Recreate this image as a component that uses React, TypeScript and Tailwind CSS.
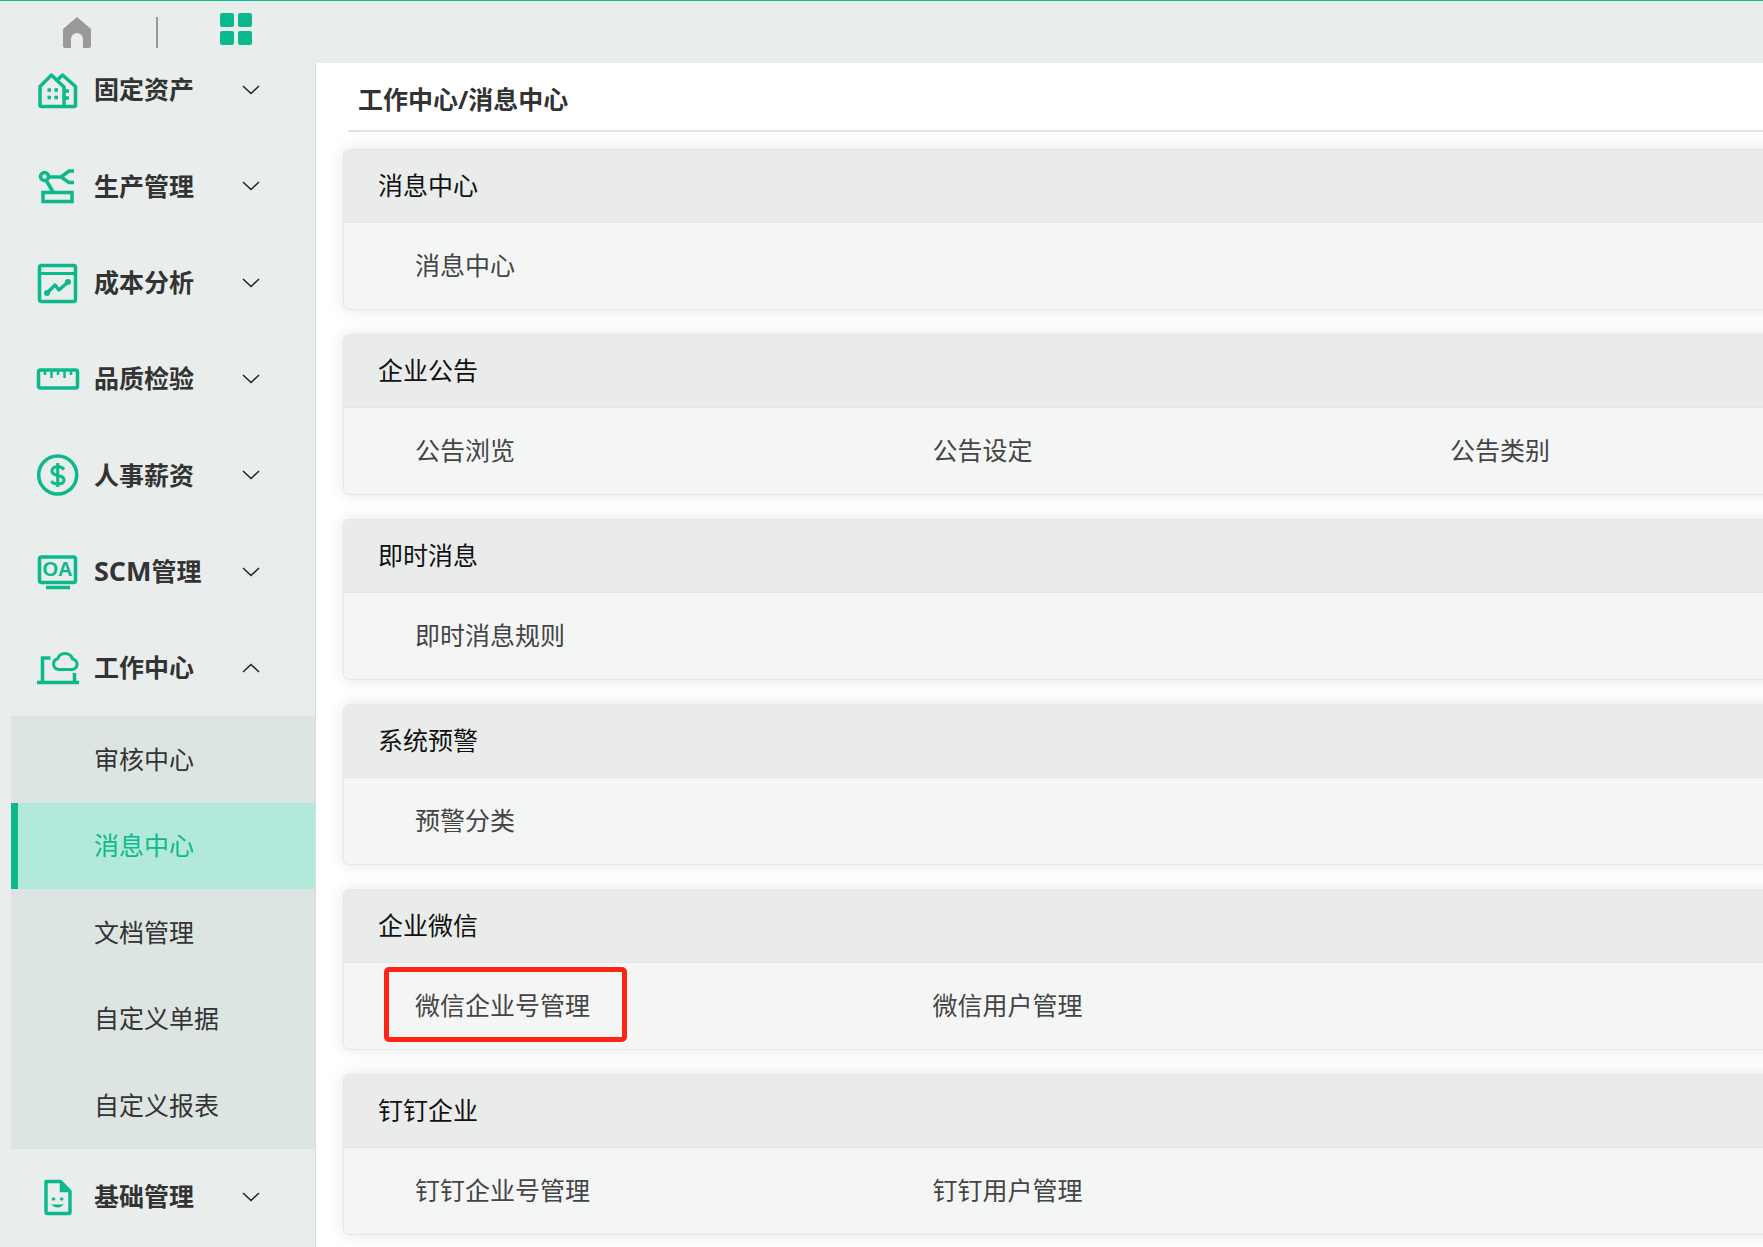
import type { ReactNode } from 'react';

const GREEN = '#0cb98c';

const FixedAssetIcon = () => (
  <svg width="44" height="44" viewBox="0 0 44 44" fill="none" stroke={GREEN} strokeWidth="3.5" strokeLinejoin="round">
    <path d="M4 18.5 L15.5 7 L21 12.5 L26.5 7 L39.5 18.5 V37 a1.5 1.5 0 0 1 -1.5 1.5 H5.5 a1.5 1.5 0 0 1 -1.5 -1.5 Z" />
    <path d="M21 12.5 L28 19 V38" />
    <path d="M11.5 22 H15 M18.5 22 H22 M11.5 29.5 H15 M18.5 29.5 H22 M29 23 H33 M29 30 H33" />
  </svg>
);

const ProductionIcon = () => (
  <svg width="44" height="44" viewBox="0 0 44 44" fill="none" stroke={GREEN} strokeWidth="3.5">
    <rect x="7" y="28.5" width="29" height="9" />
    <circle cx="8.5" cy="12.5" r="4" />
    <path d="M10 16 L17 28 M13 13 H25 M38 7 H33 L25 13 L33 18.5 H38" />
  </svg>
);

const CostIcon = () => (
  <svg width="44" height="44" viewBox="0 0 44 44" fill="none" stroke={GREEN} strokeWidth="3.5">
    <rect x="3.5" y="4.5" width="36" height="36" rx="2" />
    <path d="M3.5 12.5 H39.5" strokeWidth="3" />
    <path d="M11 32 L19 24 L23 29 L32 21" strokeLinecap="round" strokeLinejoin="round" />
    <circle cx="11" cy="32" r="3" fill={GREEN} stroke="none" />
    <circle cx="32" cy="21" r="3" fill={GREEN} stroke="none" />
  </svg>
);

const RulerIcon = () => (
  <svg width="44" height="44" viewBox="0 0 44 44" fill="none" stroke={GREEN} strokeWidth="3.5">
    <rect x="2.5" y="13" width="39" height="18" rx="2" />
    <path d="M9 13 V18 M15.5 13 V21 M22 13 V18 M28.5 13 V21 M35 13 V18" strokeWidth="2.5" />
  </svg>
);

const SalaryIcon = () => (
  <svg width="44" height="44" viewBox="0 0 44 44" fill="none" stroke={GREEN} strokeWidth="3.5">
    <circle cx="21.7" cy="22" r="19" />
    <path
      d="M28 16.5 C26.5 14.5 24.5 13.5 21.7 13.5 C18 13.5 16 15.5 16 18 C16 21 19 22 21.7 22.5 C25 23 28 24 28 27 C28 29.5 25.5 31 21.7 31 C18.5 31 16.5 30 15.5 28 M21.7 10 V34"
      strokeWidth="3"
    />
  </svg>
);

const ScmIcon = () => (
  <svg width="44" height="44" viewBox="0 0 44 44" fill="none" stroke={GREEN} strokeWidth="3.5">
    <rect x="3.5" y="7" width="36" height="25.5" rx="2" />
    <path d="M10 37.5 H34" />
    <text x="21.5" y="26" textAnchor="middle" fontSize="20" fontWeight="700" fontFamily="Liberation Sans" fill={GREEN} stroke="none">
      OA
    </text>
  </svg>
);

const WorkIcon = () => (
  <svg width="44" height="44" viewBox="0 0 44 44" fill="none" stroke={GREEN} strokeWidth="3.5">
    <path d="M1 36.5 H43" />
    <path d="M6.5 36 V12 H14.5 M38.5 27 V36" />
    <path d="M22.5 23.5 a5.5 5.5 0 0 1 -0.8 -10.8 C23 9 26 7.5 29 7.5 C33 7.5 35.6 10 36.5 13 a5.3 5.3 0 0 1 0 10.5 Z" strokeLinejoin="round" strokeWidth="3" />
  </svg>
);

const BaseIcon = () => (
  <svg width="44" height="44" viewBox="0 0 44 44" fill="none" stroke={GREEN} strokeWidth="3.5" strokeLinejoin="round">
    <path d="M10 6.5 H24.5 L34 16.5 V37 a1.5 1.5 0 0 1 -1.5 1.5 H11.5 a1.5 1.5 0 0 1 -1.5 -1.5 Z" />
    <path d="M24.5 7 V16.5 H33.5 Z" fill={GREEN} strokeWidth="1.5" />
    <circle cx="17.5" cy="24" r="1.8" fill={GREEN} stroke="none" />
    <circle cx="25.7" cy="24" r="1.8" fill={GREEN} stroke="none" />
    <path d="M15 29.5 Q21.6 35.5 28 29.5 Z" fill={GREEN} stroke="none" />
  </svg>
);

const Chevron = ({ up }: { up?: boolean }) => (
  <svg width="18" height="10" viewBox="0 0 18 10" fill="none" stroke="#222" strokeWidth="1.5" className="shrink-0">
    <path d={up ? 'M1 9 L9 1.5 L17 9' : 'M1 1 L9 8.5 L17 1'} />
  </svg>
);

const MenuRow = ({ icon, label, up }: { icon: ReactNode; label: ReactNode; up?: boolean }) => (
  <div className="flex h-[96.3px] items-center gap-[14px] pl-[36px] pr-[55px]">
    <div className="h-[44px] w-[44px] shrink-0">{icon}</div>
    <span className="flex-1 text-[25px] font-bold text-[#333]">{label}</span>
    <Chevron up={up} />
  </div>
);

const topMenus = [
  { key: 'assets', label: '固定资产', icon: <FixedAssetIcon /> },
  { key: 'production', label: '生产管理', icon: <ProductionIcon /> },
  { key: 'cost', label: '成本分析', icon: <CostIcon /> },
  { key: 'quality', label: '品质检验', icon: <RulerIcon /> },
  { key: 'hr', label: '人事薪资', icon: <SalaryIcon /> },
  {
    key: 'scm',
    label: (
      <>
        <span className="text-[27px] leading-none">SCM</span>管理
      </>
    ),
    icon: <ScmIcon />,
  },
];

const subMenus = ['审核中心', '消息中心', '文档管理', '自定义单据', '自定义报表'];

const sections = [
  { title: '消息中心', links: ['消息中心'] },
  { title: '企业公告', links: ['公告浏览', '公告设定', '公告类别'] },
  { title: '即时消息', links: ['即时消息规则'] },
  { title: '系统预警', links: ['预警分类'] },
  { title: '企业微信', links: ['微信企业号管理', '微信用户管理'], marked: true },
  { title: '钉钉企业', links: ['钉钉企业号管理', '钉钉用户管理'] },
];

export default function App() {
  return (
    <div className="flex h-screen flex-col overflow-hidden bg-white font-['Open_Sans','Noto_Sans_CJK_SC',sans-serif]">
      <header className="relative z-10 flex h-[63px] shrink-0 items-start border-t border-[#0cb98c] bg-[#e9edec] pl-[63px]">
        <svg width="28" height="31" viewBox="0 0 28 31" fill="#999" className="mt-[16px]">
          <path d="M14 0 L28 12 V29 a2 2 0 0 1 -2 2 H20 V22 a6 6 0 0 0 -12 0 V31 H2 a2 2 0 0 1 -2 -2 V12 Z" />
        </svg>
        <div className="ml-[65px] mt-[16px] h-[31px] w-[2px] bg-[#999]" />
        <div className="ml-[62px] mt-[12px] grid grid-cols-[14px_14px] gap-[3.6px]">
          <div className="h-[14px] rounded-[2px] bg-[#0cb98c]" />
          <div className="h-[14px] rounded-[2px] bg-[#0cb98c]" />
          <div className="h-[14px] rounded-[2px] bg-[#0cb98c]" />
          <div className="h-[14px] rounded-[2px] bg-[#0cb98c]" />
        </div>
      </header>
      <div className="flex min-h-0 flex-1">
        <aside className="w-[316px] shrink-0 overflow-hidden border-r border-[#d8dcdf] bg-[#e9edec]">
          <div className="mt-[-21px]">
            {topMenus.map((menu) => (
              <MenuRow key={menu.key} icon={menu.icon} label={menu.label} />
            ))}
            <MenuRow icon={<WorkIcon />} label="工作中心" up />
            <div className="ml-[11px] bg-[#dde5e3]">
              {subMenus.map((name, index) =>
                index === 1 ? (
                  <div
                    key={name}
                    className="flex h-[86.6px] items-center border-l-[7px] border-[#0cb98c] bg-[#b3e9da] pl-[76px] text-[25px] text-[#0cb98c]"
                  >
                    {name}
                  </div>
                ) : (
                  <div key={name} className="flex h-[86.6px] items-center pl-[83px] text-[25px] text-[#333]">
                    {name}
                  </div>
                )
              )}
            </div>
            <MenuRow icon={<BaseIcon />} label="基础管理" />
          </div>
        </aside>
        <main className="min-w-0 flex-1 overflow-hidden pl-[27px]">
          <div className="ml-[5px] flex h-[69px] items-center border-b-2 border-[#e2e2e2] pl-[10px] pt-[7px] text-[25px] font-bold text-[#333]">
            工作中心/消息中心
          </div>
          <div className="mt-[17px] flex w-[1600px] flex-col gap-[24px]">
            {sections.map((section) => (
              <section
                key={section.title}
                className="relative h-[161px] overflow-visible rounded-[6px] border border-[#e4e7eb] bg-[#f4f6f5] shadow-[0_0_16px_rgba(0,0,0,0.1)]"
              >
                <div className="flex h-[73px] items-center rounded-t-[6px] border-b border-[#e2e6ea] bg-[#e9eceb] pl-[34px] text-[25px] text-[#111]">
                  {section.title}
                </div>
                <div className="grid h-[86px] grid-cols-[repeat(3,517.5px)] items-center pb-[1px] pl-[71px] text-[25px] text-[#444]">
                  {section.links.map((link) => (
                    <span key={link}>{link}</span>
                  ))}
                </div>
                {section.marked && (
                  <div className="absolute left-[40px] top-[77px] h-[75px] w-[243px] rounded-[5px] border-[5px] border-[#ff2516]" />
                )}
              </section>
            ))}
          </div>
        </main>
      </div>
    </div>
  );
}
